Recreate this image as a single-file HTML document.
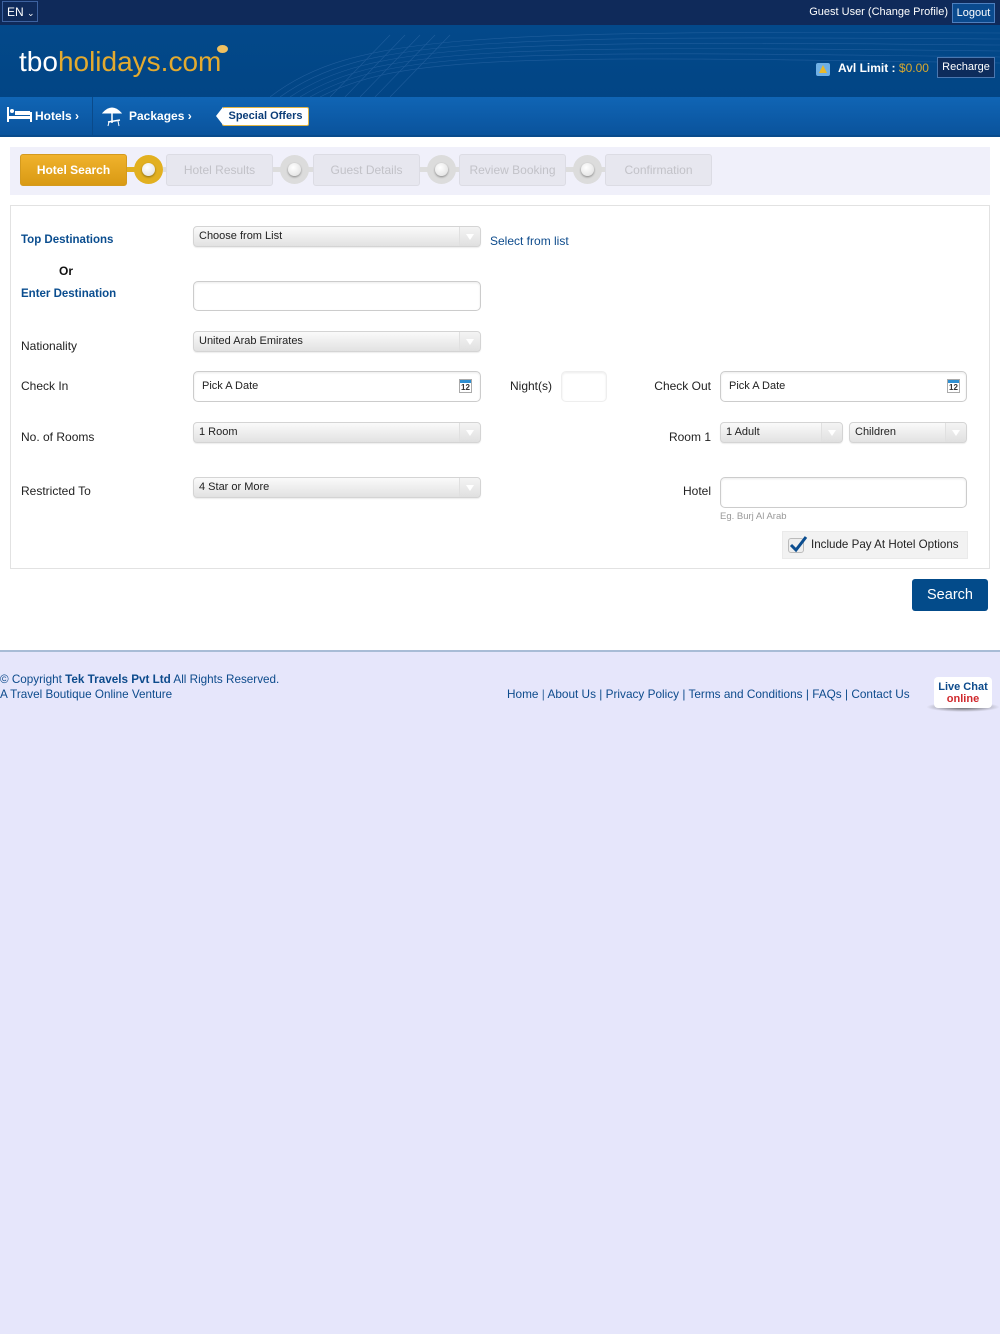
<!DOCTYPE html>
<html><head><meta charset="utf-8">
<style>
*{box-sizing:border-box;margin:0;padding:0}
html,body{width:1000px;height:1334px;background:#e6e6fb;font-family:"Liberation Sans",Arial,sans-serif;font-size:13px;color:#222;overflow:hidden}
.a{position:absolute}
#top{left:0;top:0;width:1000px;height:25px;background:#0f2a5a}
#hdr{left:0;top:25px;width:1000px;height:72px;background:linear-gradient(180deg,#03498a,#024585)}
#nav{left:0;top:97px;width:1000px;height:40px;background:linear-gradient(180deg,#1065b5,#0a539c);border-bottom:2px solid #094b8c}
#main{left:0;top:137px;width:1000px;height:514px;background:#fff}
.sel{position:absolute;height:21px;border:1px solid #d4d4d4;border-radius:4px;background:linear-gradient(#fafafa,#e2e2e2);font-size:11px;color:#222;padding:3px 0 0 5px;box-shadow:0 1px 1px rgba(0,0,0,.08)}
.sel:after{content:"";position:absolute;right:0;top:0;width:20px;height:19px;border-left:1px solid #e0e0e0;background:linear-gradient(#f4f4f4,#e0e0e0);border-radius:0 4px 4px 0}
.sel:before{content:"";position:absolute;right:6px;top:7px;border-left:4px solid transparent;border-right:4px solid transparent;border-top:6px solid #fff;z-index:2}
.inp{position:absolute;border:1px solid #ccc;border-radius:5px;background:#fff;box-shadow:inset 0 1px 2px rgba(0,0,0,.08);font-size:11px;padding-left:8px}
.lbl{position:absolute;font-size:12px;color:#222}
.blue{color:#0a4d8f;font-weight:bold}
.step{position:absolute;top:154px;height:32px;width:107px;background:#e7e7ef;border:1px solid #dcdce4;border-radius:3px;color:#c2c2c8;font-size:12px;text-align:center;line-height:30px}
.dot{position:absolute;top:155px;width:29px;height:29px;border-radius:50%;background:#dcdcdc}
.dot:after{content:"";position:absolute;left:8px;top:8px;width:13px;height:13px;border-radius:50%;background:radial-gradient(circle at 40% 35%,#fff,#ddd);box-shadow:0 1px 2px rgba(0,0,0,.4)}
.cal{position:absolute;width:13px;height:14px;border:1px solid #aaa;background:#fff;font-size:8px;font-weight:bold;text-align:center;line-height:10px;padding-top:3px;color:#333}
.cal:before{content:"";position:absolute;left:0;top:0;width:11px;height:3px;background:#2e8fd1}
</style></head><body>
<div id="top" class="a">
 <div class="a" style="left:2px;top:1px;width:36px;height:21px;border:1px solid #3d62a0;background:#0f2a5a;color:#fff;font-size:12px;padding:3px 0 0 4px">EN <span style="font-size:9px">&#8964;</span></div>
 <div class="a" style="right:52px;top:6px;color:#fff;font-size:11px;white-space:nowrap">Guest User (Change Profile)</div>
 <div class="a" style="left:952px;top:3px;width:43px;height:20px;border:1px solid #4c7fbf;background:#0a4a8e;color:#fff;font-size:11px;text-align:center;line-height:18px">Logout</div>
</div>
<div id="hdr" class="a">
 <svg class="a" style="left:270px;top:0" width="730" height="72"><g stroke="#2a66a5" stroke-width="0.6" fill="none" opacity=".7">
 <path d="M0 72 C80 10 200 5 730 8"/><path d="M10 72 C90 14 210 10 730 14"/><path d="M20 72 C100 18 220 15 730 20"/><path d="M30 72 C110 22 230 20 730 26"/><path d="M40 72 C120 26 240 25 730 32"/><path d="M50 72 C130 30 250 30 730 38"/>
 <path d="M60 72 L120 10"/><path d="M75 72 L135 10"/><path d="M90 72 L150 10"/><path d="M105 72 L165 10"/><path d="M120 72 L180 10"/></g></svg>
 <div class="a" style="left:19px;top:21px;font-size:28px;letter-spacing:0;white-space:nowrap"><span style="color:#fff">tbo</span><span style="color:#e3aa2f">holidays.com</span></div>
 <div class="a" style="left:217px;top:20px;width:11px;height:8px;border-radius:50%;background:#f0c060"></div>
 <div class="a" style="left:816px;top:38px;width:14px;height:13px;background:#6fb0e6;border-radius:2px"><div style="margin:2px 0 0 3px;width:0;height:0;border-left:4px solid transparent;border-right:4px solid transparent;border-bottom:8px solid #e8b82a"></div></div>
 <div class="a" style="left:838px;top:36px;color:#fff;font-weight:bold;font-size:12px">Avl Limit : <span style="color:#d7a82f;font-weight:normal">$0.00</span></div>
 <div class="a" style="left:937px;top:32px;width:58px;height:21px;border:1px solid #4a77b0;background:#0d2c5c;color:#fff;font-size:11px;text-align:center;line-height:19px">Recharge</div>
</div>
<div id="nav" class="a">
 <svg class="a" style="left:7px;top:10px" width="25" height="16"><g fill="#fff"><rect x="0" y="0" width="2" height="15"/><rect x="0" y="9" width="25" height="3"/><rect x="23" y="5" width="2" height="10"/><circle cx="5" cy="4" r="2"/><rect x="8" y="4" width="15" height="4"/></g></svg>
 <div class="a" style="left:35px;top:12px;color:#fff;font-weight:bold;font-size:12px">Hotels &#8250;</div>
 <div class="a" style="left:92px;top:0;width:1px;height:38px;background:#0a4a8a"></div>
 <svg class="a" style="left:102px;top:8px" width="20" height="22"><g stroke="#fff" fill="#fff"><path d="M1 8 Q10 -2 19 8 Z"/><line x1="10" y1="8" x2="10" y2="18" stroke-width="1.5"/><line x1="6" y1="17" x2="18" y2="15" stroke-width="1.5"/><line x1="7" y1="17" x2="6" y2="21"/><line x1="16" y1="16" x2="17" y2="21"/></g></svg>
 <div class="a" style="left:129px;top:12px;color:#fff;font-weight:bold;font-size:12px">Packages &#8250;</div>
 <div class="a" style="left:222px;top:10px;width:87px;height:19px;background:#fff;border:1px solid #e2b543;border-radius:2px;color:#0b3d78;font-weight:bold;font-size:11px;text-align:center;line-height:17px">Special Offers</div>
 <div class="a" style="left:216px;top:10px;width:0;height:0;border-top:9px solid transparent;border-bottom:9px solid transparent;border-right:7px solid #fff"></div>
</div>
<div id="main" class="a">
 <div class="a" style="left:10px;top:10px;width:980px;height:48px;background:#f0f0fa"></div>
 <div class="a" style="left:10px;top:68px;width:980px;height:364px;border:1px solid #e2e2e2"></div>
</div>
<div class="a" style="left:20px;top:154px;width:107px;height:32px;background:linear-gradient(#f0b22c,#d99a14);border:1px solid #d49a1e;border-radius:3px;color:#fff;font-weight:bold;font-size:12px;text-align:center;line-height:30px">Hotel Search</div>
<div class="a" style="left:127px;top:167px;width:12px;height:5px;background:#e2b020"></div>
<div class="a" style="left:134px;top:155px;width:29px;height:29px;border-radius:50%;background:#e2b020"><div style="position:absolute;left:8px;top:8px;width:13px;height:13px;border-radius:50%;background:radial-gradient(circle at 40% 35%,#fff,#ddd);box-shadow:0 1px 2px rgba(0,0,0,.4)"></div></div>
<div class="a" style="left:163px;top:167px;width:6px;height:5px;background:#ddd"></div>
<div class="step" style="left:166px">Hotel Results</div>
<div class="a" style="left:273px;top:167px;width:40px;height:5px;background:#ddd"></div>
<div class="dot" style="left:280px"></div>
<div class="step" style="left:313px">Guest Details</div>
<div class="a" style="left:420px;top:167px;width:40px;height:5px;background:#ddd"></div>
<div class="dot" style="left:427px"></div>
<div class="step" style="left:459px">Review Booking</div>
<div class="a" style="left:566px;top:167px;width:40px;height:5px;background:#ddd"></div>
<div class="dot" style="left:573px"></div>
<div class="step" style="left:605px">Confirmation</div>

<div class="lbl blue" style="left:21px;top:234px;font-size:11.5px">Top Destinations</div>
<div class="sel" style="left:193px;top:226px;width:288px">Choose from List</div>
<div class="lbl" style="left:490px;top:234px;color:#0d4b8c">Select from list</div>
<div class="lbl" style="left:59px;top:264px;font-weight:bold;color:#111">Or</div>
<div class="lbl blue" style="left:21px;top:288px;font-size:11.5px">Enter Destination</div>
<div class="inp" style="left:193px;top:281px;width:288px;height:30px"></div>
<div class="lbl" style="left:21px;top:339px">Nationality</div>
<div class="sel" style="left:193px;top:331px;width:288px">United Arab Emirates</div>
<div class="lbl" style="left:21px;top:379px">Check In</div>
<div class="inp" style="left:193px;top:371px;width:288px;height:31px;padding-top:8px">Pick A Date</div>
<div class="cal" style="left:459px;top:379px">12</div>
<div class="lbl" style="left:510px;top:379px">Night(s)</div>
<div class="inp" style="left:561px;top:371px;width:46px;height:31px;border-color:#eee"></div>
<div class="lbl" style="right:289px;top:379px">Check Out</div>
<div class="inp" style="left:720px;top:371px;width:247px;height:31px;padding-top:8px">Pick A Date</div>
<div class="cal" style="left:947px;top:379px">12</div>
<div class="lbl" style="left:21px;top:430px">No. of Rooms</div>
<div class="sel" style="left:193px;top:422px;width:288px">1 Room</div>
<div class="lbl" style="right:289px;top:430px">Room 1</div>
<div class="sel" style="left:720px;top:422px;width:123px">1 Adult</div>
<div class="sel" style="left:849px;top:422px;width:118px">Children</div>
<div class="lbl" style="left:21px;top:484px">Restricted To</div>
<div class="sel" style="left:193px;top:477px;width:288px">4 Star or More</div>
<div class="lbl" style="right:289px;top:484px">Hotel</div>
<div class="inp" style="left:720px;top:477px;width:247px;height:31px"></div>
<div class="a" style="left:720px;top:511px;font-size:9.5px;color:#999">Eg. Burj Al Arab</div>
<div class="a" style="left:782px;top:531px;width:186px;height:28px;background:#f2f2f2;border:1px solid #eaeaea"></div>
<div class="a" style="left:788px;top:538px;width:16px;height:15px;border:1px solid #bbb;border-radius:3px;background:#eee"></div>
<svg class="a" style="left:788px;top:534px" width="20" height="20"><path d="M3 11 L8 16 L18 3" stroke="#0b4d8f" stroke-width="3" fill="none"/></svg>
<div class="lbl" style="left:811px;top:538px;font-size:11.6px">Include Pay At Hotel Options</div>
<div class="a" style="left:912px;top:579px;width:76px;height:32px;background:#034b8a;border-radius:3px;color:#fff;font-size:14.5px;text-align:center;line-height:32px">Search</div>

<div class="a" style="left:0;top:650px;width:1000px;height:2px;background:#a8bcd6"></div>
<div class="a" style="left:0;top:672px;color:#0d4b8c;font-size:11.7px;line-height:15px">© Copyright <b>Tek Travels Pvt Ltd</b> All Rights Reserved.<br>A Travel Boutique Online Venture</div>
<div class="a" style="left:507px;top:687px;font-size:11.8px;color:#0d4b8c;white-space:nowrap">Home <span style="color:#3a6aa0">|</span> About Us <span>|</span> Privacy Policy <span>|</span> Terms and Conditions <span>|</span> FAQs <span>|</span> Contact Us</div>
<div class="a" style="left:926px;top:702px;width:74px;height:10px;background:radial-gradient(ellipse at center,#555 0%,rgba(0,0,0,0) 70%)"></div>
<div class="a" style="left:934px;top:677px;width:58px;height:31px;background:#fff;border-radius:4px;text-align:center;font-size:11px;font-weight:bold;line-height:12px;padding-top:4px"><span style="color:#0d4b8c">Live Chat</span><br><span style="color:#d0282c">online</span></div>
</body></html>
